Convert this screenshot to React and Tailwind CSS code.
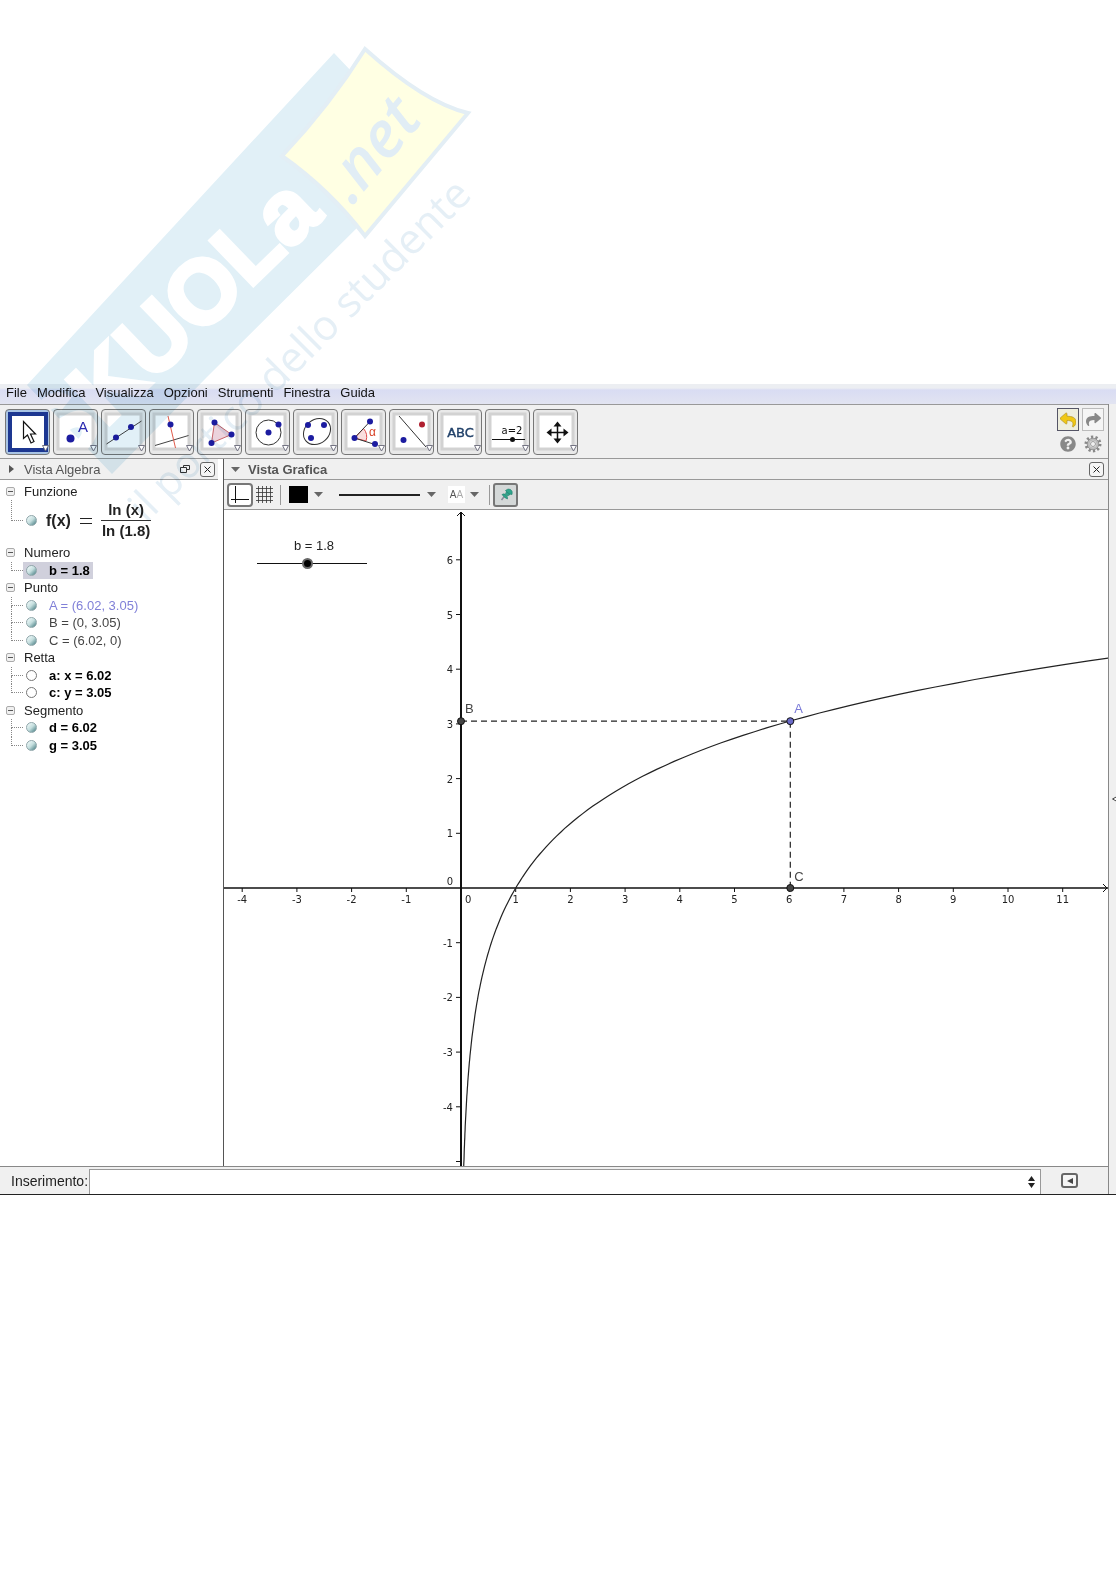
import React, { useState } from "react";
import { FaQuestionCircle, FaShare, FaReply } from "react-icons/fa";

const BLUE = "#1c1ca0";
const UNIT = 54.7;
const ORIGIN_X = 237;
const ORIGIN_Y = 378;

const toX = (x) => ORIGIN_X + x * UNIT;
const toY = (y) => ORIGIN_Y - y * UNIT;

const menus = ["File", "Modifica", "Visualizza", "Opzioni", "Strumenti", "Finestra", "Guida"];

const Dot = ({ x, y, r = 3, fill = BLUE }) => <circle cx={x} cy={y} r={r} fill={fill} />;

const tools = [
  {
    name: "Muovi",
    icon: <path d="M18.5 12.500v17l4-3.500 3.500 8 3-1.500-3.500-7.500h5z" fill="#fff" stroke="#111" strokeWidth="1.200" />,
  },
  {
    name: "Punto",
    icon: (
      <>
        <Dot x={17.5} y={29.5} r={4} />
        <text x="25" y="23" fontSize="15" fill="#2a2ab0">A</text>
      </>
    ),
  },
  {
    name: "Retta",
    icon: (
      <>
        <path d="M5.500 35 40.500 12" stroke="#444" />
        <Dot x={15} y={28.5} />
        <Dot x={30} y={18} />
      </>
    ),
  },
  {
    name: "Perpendicolare",
    icon: (
      <>
        <path d="M6 36.500 39.500 26.500" stroke="#444" />
        <path d="M19 7 26.500 39" stroke="#e05a4a" />
        <Dot x={21.5} y={15.5} />
      </>
    ),
  },
  {
    name: "Poligono",
    icon: (
      <>
        <path d="M17.500 13.500 34.500 25.500 14.500 34z" fill="#ecd3dc" stroke="#c8646a" />
        <Dot x={17.5} y={13.5} />
        <Dot x={34.5} y={25.5} />
        <Dot x={14.5} y={34} />
      </>
    ),
  },
  {
    name: "Circonferenza",
    icon: (
      <>
        <circle cx="23.500" cy="23.500" r="12.500" fill="none" stroke="#333" />
        <Dot x={23.5} y={23.5} />
        <Dot x={33.5} y={15.5} />
      </>
    ),
  },
  {
    name: "Conica",
    icon: (
      <>
        <ellipse cx="24" cy="22.500" rx="14.500" ry="12" transform="rotate(-40 24 22.500)" fill="none" stroke="#333" />
        <Dot x={15} y={16} />
        <Dot x={31} y={16} />
        <Dot x={18} y={29} />
      </>
    ),
  },
  {
    name: "Angolo",
    icon: (
      <>
        <path d="M13.500 29 22.500 19.500A13 13 0 0 1 25 32z" fill="#f9dede" stroke="#e04a4a" />
        <path d="M29 12.500 13.500 29 34 35.500" fill="none" stroke="#333" />
        <text x="28" y="27" fontSize="12" fill="#d8442a">α</text>
        <Dot x={29} y={12.5} />
        <Dot x={13.5} y={29} />
        <Dot x={34} y={35} />
      </>
    ),
  },
  {
    name: "Simmetria",
    icon: (
      <>
        <path d="M10 7 37 38" stroke="#333" />
        <Dot x={33} y={15.5} fill="#b02030" />
        <Dot x={14.5} y={31} />
      </>
    ),
  },
  {
    name: "Testo",
    icon: (
      <text x="23.500" y="28" fontSize="13" textAnchor="middle" fontFamily="DejaVu Sans" fill="#22426a" stroke="#22426a" strokeWidth="0.400">
        ABC
      </text>
    ),
  },
  {
    name: "Slider",
    icon: (
      <>
        <text x="27" y="25" fontSize="10" textAnchor="middle" fontFamily="DejaVu Sans" fill="#111">a=2</text>
        <path d="M7 30.500H40" stroke="#111" />
        <Dot x={27.5} y={30.5} r={2.5} fill="#111" />
      </>
    ),
  },
  {
    name: "Muovi la vista",
    icon: (
      <>
        <path d="M24.500 16V31M17 23.500H32" stroke="#111" strokeWidth="1.500" />
        <path d="M24.500 12.500l4 5h-8zM24.500 34.500l4-5h-8zM13.500 23.500l5-4v8zM35.500 23.500l-5-4v8z" fill="#111" />
      </>
    ),
  },
];

const groups = [
  { name: "Numero", items: [{ text: "b = 1.8", bold: true, on: true, selected: true }] },
  {
    name: "Punto",
    items: [
      { text: "A = (6.02, 3.05)", on: true, color: "text-[#8080d8]" },
      { text: "B = (0, 3.05)", on: true, color: "text-[#444]" },
      { text: "C = (6.02, 0)", on: true, color: "text-[#444]" },
    ],
  },
  { name: "Retta", items: [{ text: "a: x = 6.02", bold: true }, { text: "c: y = 3.05", bold: true }] },
  { name: "Segmento", items: [{ text: "d = 6.02", bold: true, on: true }, { text: "g = 3.05", bold: true, on: true }] },
];

function Toolbar() {
  const [active, setActive] = useState(0);
  return (
    <div className="flex items-center justify-between border-y border-[#999] bg-[#f0f0f0] pl-[5px] pr-1 h-[55px]">
      <div className="flex gap-[3px]">
        {tools.map((tool, i) => (
          <button
            key={tool.name}
            aria-label={tool.name}
            onClick={() => setActive(i)}
            className={`relative h-[46px] w-[45px] rounded-[4px] border border-[#777] ${active === i ? "bg-[#a9c4e4]" : "bg-[#e9e9e9]"}`}
          >
            <svg viewBox="0 0 45 46" className="absolute -inset-px h-[46px] w-[45px]" fontFamily="Liberation Sans">
              {active === i ? (
                <rect x="5" y="5" width="36" height="36" fill="#fff" stroke="#1d3791" strokeWidth="4" />
              ) : (
                <rect x="5" y="5" width="35" height="35" fill="#fff" stroke="#d2d2d2" strokeWidth="3" />
              )}
              {tool.icon}
              <path d="M37.500 36.500h6l-3 5.500z" fill="#fff" stroke="#667" strokeWidth="0.900" />
            </svg>
          </button>
        ))}
      </div>
      <div className="grid grid-cols-2 gap-x-[3px] gap-y-px">
        <button aria-label="Annulla" className="flex h-[23px] w-[22px] items-center justify-center border border-[#556] bg-[#eeeedd]">
          <FaReply size={16} color="#f0c814" stroke="#a88a20" strokeWidth={20} />
        </button>
        <button aria-label="Ripeti" className="flex h-[23px] w-[22px] items-center justify-center border border-[#bbb] bg-[#f5f5f5]">
          <FaShare size={15} color="#888" />
        </button>
        <button aria-label="Aiuto" className="flex h-[23px] w-[22px] items-center justify-center">
          <FaQuestionCircle size={16} color="#888" />
        </button>
        <button aria-label="Impostazioni" className="flex h-[23px] w-[22px] items-center justify-center">
          <svg viewBox="0 0 18 18" width="18" height="18" fill="none" stroke="#888">
            <circle cx="9" cy="9" r="7" strokeWidth="3" strokeDasharray="2.200 2.200" />
            <circle cx="9" cy="9" r="4.500" strokeWidth="2.500" stroke="#bbb" />
            <circle cx="9" cy="9" r="5.800" strokeWidth="0.800" />
            <circle cx="9" cy="9" r="2.500" strokeWidth="0.800" />
          </svg>
        </button>
      </div>
    </div>
  );
}

function CloseButton() {
  return (
    <button aria-label="Chiudi" className="flex h-[15px] w-[15px] items-center justify-center rounded-[3px] border border-[#666] bg-[#f5f5f5]">
      <svg viewBox="0 0 7 7" width="7" height="7" stroke="#222">
        <path d="M0.500 0.500l6 6M6.500 0.500l-6 6" />
      </svg>
    </button>
  );
}

function Branch({ last }) {
  return (
    <span className="ml-[11px] flex w-3 shrink-0 flex-col self-stretch">
      <span className="flex-1 border-b border-l border-dotted border-[#888]"></span>
      <span className={`flex-1 border-dotted border-[#888] ${last ? "" : "border-l"}`}></span>
    </span>
  );
}

function Marble({ on, label }) {
  const [visible, setVisible] = useState(on);
  return (
    <button
      aria-label={label}
      onClick={() => setVisible(!visible)}
      className={`ml-[3px] h-[11px] w-[11px] shrink-0 rounded-full border ${visible ? "border-[#8fa6aa] bg-linear-to-br from-[#f8ffff] via-[#c4dede] to-[#3f7a80]" : "border-[#777] bg-white"}`}
    ></button>
  );
}

function GroupRow({ name }) {
  return (
    <div className="flex min-h-0 flex-1 items-center pl-[6px]">
      <button aria-label={`Comprimi ${name}`} className="flex h-[9px] w-[9px] items-center justify-center rounded-[2px] border border-[#aaa] bg-[#f0f0f0]">
        <span className="h-px w-[5px] bg-[#555]"></span>
      </button>
      <span className="ml-[9px]">{name}</span>
    </div>
  );
}

function AlgebraView() {
  return (
    <aside className="flex w-[224px] shrink-0 flex-col border-r border-[#555] pr-[5px]">
      <div className="flex h-[21px] items-center border-b border-[#999] bg-[#f0f0f0] pl-[9px] pr-[3px] text-[#555]">
        <svg viewBox="0 0 5 8" width="5" height="8" fill="#555"><path d="M0 0l5 4-5 4z" /></svg>
        <h2 className="ml-[10px] flex-1">Vista Algebra</h2>
        <button aria-label="Sgancia" className="mr-[10px]">
          <svg viewBox="0 0 10 8" width="10" height="8" fill="#f0f0f0" stroke="#333">
            <path d="M3.500 0.500h6v4h-6z" />
            <path d="M0.500 2.500h6v5h-6z" />
          </svg>
        </button>
        <CloseButton />
      </div>
      <div className="mt-[2px] flex h-[18px]">
        <GroupRow name="Funzione" />
      </div>
      <div className="flex h-[41px] items-center font-bold">
        <Branch last />
        <Marble on label="f" />
        <span className="ml-[9px] text-[16px]">f(x)</span>
        <svg viewBox="0 0 12 6" width="12" height="6" className="ml-[9px]" stroke="#222"><path d="M0 0.500h12M0 5.500h12" /></svg>
        <span className="ml-[9px] flex flex-col items-center text-[15px] leading-[20px]">
          <span className="w-full border-b border-[#333] text-center">ln (x)</span>
          <span className="px-px">ln (1.8)</span>
        </span>
      </div>
      <div className="mt-[3px] flex h-[210px] flex-col">
        {groups.map((group) => (
          <React.Fragment key={group.name}>
            <GroupRow name={group.name} />
            {group.items.map((item, i) => (
              <div key={item.text} className={`flex min-h-0 flex-1 items-center ${item.color || "text-black"} ${item.bold ? "font-bold" : ""}`}>
                <Branch last={i === group.items.length - 1} />
                <span className={`flex h-full items-center pr-[3px] ${item.selected ? "bg-[#d0d0dc]" : ""}`}>
                  <Marble on={!!item.on} label={item.text} />
                  <span className="ml-3 whitespace-pre">{item.text}</span>
                </span>
              </div>
            ))}
          </React.Fragment>
        ))}
      </div>
    </aside>
  );
}

function Caret() {
  return <svg viewBox="0 0 9 5" width="9" height="5" fill="#666"><path d="M0 0h9L4.500 5z" /></svg>;
}

function StyleBar() {
  return (
    <div className="flex h-[30px] items-center border-b border-[#999] bg-[#f0f0f0] pl-[3px]">
      <button aria-label="Assi" className="flex h-6 w-[26px] items-center justify-center rounded-[4px] border-2 border-[#777] bg-white">
        <svg viewBox="0 0 18 18" width="18" height="18" stroke="#111"><path d="M4.500 0v17M0 13.500h18" /></svg>
      </button>
      <button aria-label="Griglia" className="ml-[3px]">
        <svg viewBox="0 0 18 18" width="18" height="18" stroke="#333">
          <path d="M2.500 0v17M6.500 0v17M10.500 0v17M14.500 0v17M0 2.500h17M0 6.500h17M0 10.500h17M0 14.500h17" strokeWidth="0.800" />
        </svg>
      </button>
      <span className="ml-[6px] h-5 w-px bg-[#999]"></span>
      <button aria-label="Colore" className="ml-2 flex items-center gap-[6px]">
        <span className="h-[17px] w-[19px] bg-black"></span>
        <Caret />
      </button>
      <button aria-label="Stile linea" className="ml-4 flex items-center gap-[7px]">
        <span className="h-[2px] w-[81px] bg-[#222]"></span>
        <Caret />
      </button>
      <button aria-label="Dimensione testo" className="ml-3 flex items-center gap-[5px]">
        <span className="flex h-[17px] w-[17px] items-center justify-center bg-white text-[10px] text-[#555]">
          A<span className="text-[#aaa]">A</span>
        </span>
        <Caret />
      </button>
      <span className="ml-[10px] h-5 w-px bg-[#999]"></span>
      <button aria-label="Blocca" className="ml-[3px] flex h-6 w-[25px] items-center justify-center rounded-[3px] border-2 border-[#777] bg-[#d4d8d8]">
        <svg viewBox="0 0 16 16" width="16" height="16" fill="#2fa58c" stroke="#1f7d6c" strokeWidth="0.600">
          <path d="M7 8.500L3.500 13" strokeWidth="1.500" stroke="#889" />
          <path d="M4 7.500q2-1.500 4 0.500t1.500 4q-1.500-0.500-3-1.800T4 7.500z" />
          <path d="M7.500 7L8.500 4.500 12 7.500 9.500 9z" />
          <path d="M7.500 3.500q2.500-2.500 5-1t1.500 5q-2 0-4-1.500t-2.500-2.500z" />
        </svg>
      </button>
    </div>
  );
}

// samples log(x) / log(1.8) densely near zero where it is steep
function curvePath() {
  const points = [];
  for (let t = -3.2; t <= 3; t += 0.04) {
    const x = Math.exp(t);
    points.push(`${toX(x).toFixed(1)} ${toY(t / Math.log(1.8)).toFixed(1)}`);
  }
  return `M${points.join("L")}`;
}

function Plot() {
  const [b, setB] = useState(1.8);
  const xs = [-4, -3, -2, -1, 1, 2, 3, 4, 5, 6, 7, 8, 9, 10, 11];
  const ys = [-4, -3, -2, -1, 1, 2, 3, 4, 5, 6];
  const ax = toX(6.02);
  const ay = toY(3.05);

  return (
    <div className="relative overflow-hidden bg-white">
      <svg className="block h-[656px] w-full" fontFamily="DejaVu Sans" fontSize="10" fill="#222">
        <path d={`M0 ${ORIGIN_Y}H3000`} stroke="#111" strokeWidth="1.500" />
        <path d={`M${ORIGIN_X} 2V656`} stroke="#111" strokeWidth="2" />
        <path d={`M${ORIGIN_X - 4} 6L${ORIGIN_X} 2L${ORIGIN_X + 4} 6`} fill="none" stroke="#111" />
        <svg x="100%" y={ORIGIN_Y} overflow="visible">
          <path d="M-5 -4L-1 0L-5 4" fill="none" stroke="#111" />
        </svg>
        {xs.map((x) => (
          <g key={x}>
            <path d={`M${toX(x)} ${ORIGIN_Y}v4`} stroke="#111" />
            <text x={toX(x)} y={ORIGIN_Y + 15} textAnchor="middle">{x}</text>
          </g>
        ))}
        {ys.map((y) => (
          <g key={y}>
            <path d={`M${ORIGIN_X} ${toY(y)}h-5`} stroke="#111" />
            <text x={ORIGIN_X - 8} y={toY(y) + 4} textAnchor="end">{y}</text>
          </g>
        ))}
        <path d={`M${ORIGIN_X} ${toY(-5)}h-5`} stroke="#111" />
        <text x={ORIGIN_X - 8} y={ORIGIN_Y - 3} textAnchor="end">0</text>
        <text x={ORIGIN_X + 4} y={ORIGIN_Y + 15}>0</text>
        <path d={curvePath()} fill="none" stroke="#222" strokeWidth="1.200" />
        <path d={`M${ORIGIN_X} ${ay}H${ax}V${ORIGIN_Y}`} fill="none" stroke="#222" strokeDasharray="6 4" strokeWidth="1.200" />
        <g stroke="#111">
          <circle cx={ORIGIN_X} cy={ay} r="3.500" fill="#444" />
          <circle cx={ax} cy={ORIGIN_Y} r="3.500" fill="#444" />
          <circle cx={ax} cy={ay} r="3.500" fill="#6a6ac8" />
        </g>
        <g fontFamily="Liberation Sans" fontSize="13" fill="#444">
          <text x={ORIGIN_X + 4} y={ay - 8}>B</text>
          <text x={ax + 4} y={ORIGIN_Y - 7}>C</text>
          <text x={ax + 4} y={ay - 8} fill="#7a7ad8">A</text>
        </g>
      </svg>
      <label className="absolute left-[33px] top-[27px] flex w-[110px] flex-col items-center">
        <span className="pl-1">b = {b}</span>
        <input
          type="range"
          min="0"
          max="4"
          step="0.1"
          value={b}
          onChange={(e) => setB(Number(e.target.value))}
          className="mt-px h-[17px] w-full appearance-none bg-[linear-gradient(#111,#111)] bg-[length:100%_1px] bg-center bg-no-repeat [&::-webkit-slider-thumb]:h-[11px] [&::-webkit-slider-thumb]:w-[11px] [&::-webkit-slider-thumb]:appearance-none [&::-webkit-slider-thumb]:rounded-full [&::-webkit-slider-thumb]:border-2 [&::-webkit-slider-thumb]:border-[#666] [&::-webkit-slider-thumb]:bg-black"
        />
      </label>
    </div>
  );
}

function GraphicsView() {
  return (
    <section className="min-w-0 flex-1">
      <div className="flex h-[21px] items-center border-b border-[#999] bg-[#f0f0f0] pl-[7px] pr-1">
        <Caret />
        <h2 className="ml-2 flex-1 font-bold text-[#555]">Vista Grafica</h2>
        <CloseButton />
      </div>
      <StyleBar />
      <Plot />
    </section>
  );
}

function InputBar() {
  return (
    <div className="flex h-[28px] items-center border-t border-[#888] bg-[#f0f0f0] pl-[11px]">
      <label htmlFor="command" className="w-[78px] pt-[2px] text-[14px]">Inserimento:</label>
      <div className="flex h-[25px] flex-1 items-center self-end border border-b-0 border-[#999] bg-white pr-[5px]">
        <input id="command" type="text" className="h-full min-w-0 flex-1 px-1 outline-none" />
        <button aria-label="Cronologia">
          <svg viewBox="0 0 7 12" width="7" height="12" fill="#222"><path d="M0 5l3.500-5L7 5zM0 7l3.500 5L7 7z" /></svg>
        </button>
      </div>
      <button aria-label="Guida comandi" className="ml-5 mr-[30px] flex h-[15px] w-[17px] items-center justify-center rounded-[3px] border-2 border-[#666] bg-[#f5f5f5]">
        <svg viewBox="0 0 6 6" width="6" height="6" fill="#444"><path d="M6 0v6L0 3z" /></svg>
      </button>
    </div>
  );
}

function Watermark() {
  return (
    <svg viewBox="0 0 500 540" className="pointer-events-none absolute left-0 top-0 h-[540px] w-[500px] mix-blend-multiply">
      <path d="M334 53L353 73 370 215 207 377 112 474 27 385z" fill="#e1f0f7" />
      <text transform="translate(62 470) rotate(-44)" fontFamily="Liberation Sans" fontWeight="bold" fontSize="90" fill="#fff" stroke="#fff" strokeWidth="4">
        SKUOLa
      </text>
      <path d="M365 49Q425 103 468 113L365 236Q330 190 282 156Q330 105 365 49z" fill="#ffffe3" stroke="#e3eef5" strokeWidth="4" />
      <text transform="translate(352 206) rotate(-50)" fontFamily="Open Sans" fontStyle="italic" fontWeight="600" fontSize="64" fill="#e1edf5">
        .net
      </text>
      <text transform="translate(146 524) rotate(-45)" fontFamily="Open Sans" fontSize="42" fill="#e5eff6">
        il portico dello studente
      </text>
    </svg>
  );
}

export default function App() {
  return (
    <main className="relative isolate min-h-screen bg-white py-96 font-['Liberation_Sans',sans-serif] text-[13px] leading-[17px] text-[#222]">
      <nav className="flex h-5 items-center gap-[10px] bg-linear-to-b from-[#eceef2] from-20% via-[#d9dcf3] via-30% to-[#e2e4f1] pb-[3px] pl-[6px] text-[#111]">
        {menus.map((menu) => (
          <button key={menu}>{menu}</button>
        ))}
      </nav>
      <div className="flex border-b border-[#222] bg-[#f0f0f0]">
        <div className="min-w-0 flex-1 border-r border-[#888]">
          <Toolbar />
          <div className="flex bg-white">
            <AlgebraView />
            <GraphicsView />
          </div>
          <InputBar />
        </div>
        <div className="flex w-[7px] items-center overflow-hidden">
          <button aria-label="Apri pannello" className="ml-[3px] shrink-0">
            <svg viewBox="0 0 8 8" width="8" height="8" fill="#fff" stroke="#444"><path d="M7 0.500L0.500 4 7 7.500z" /></svg>
          </button>
        </div>
      </div>
      <Watermark />
    </main>
  );
}
